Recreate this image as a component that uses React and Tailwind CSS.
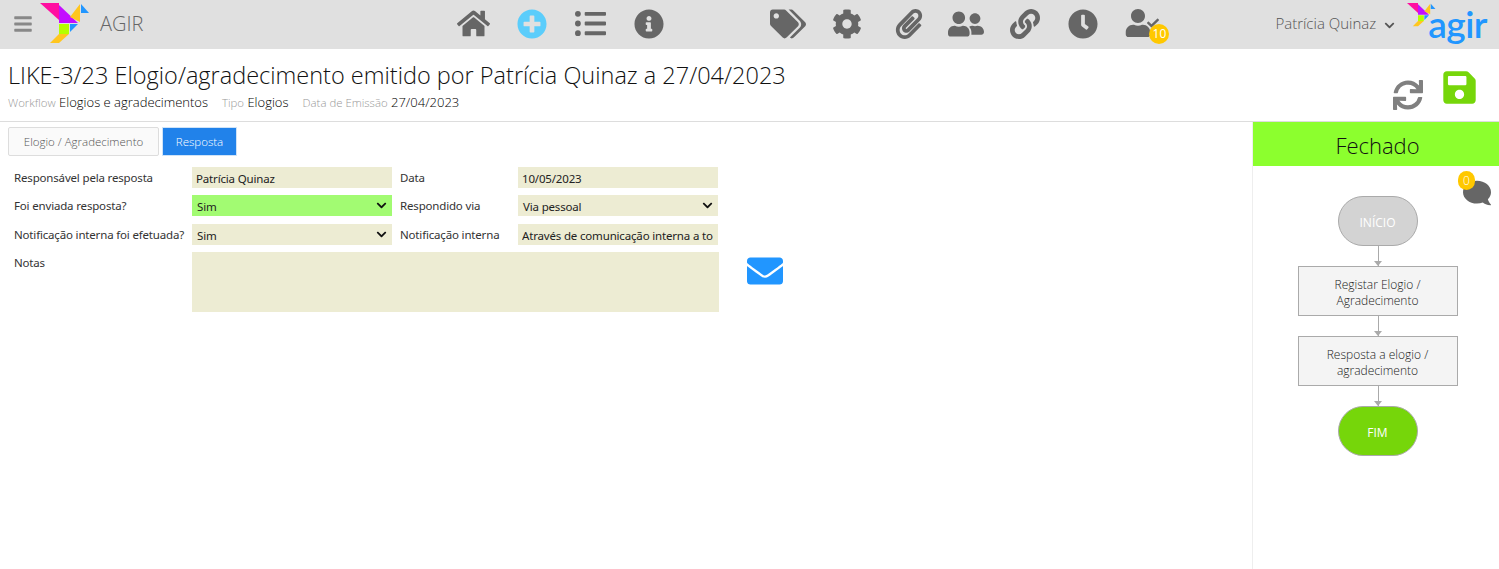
import React from 'react';
import {
  FaBars, FaHome, FaPlusCircle, FaListUl, FaInfoCircle, FaTags, FaCog, FaPaperclip,
  FaUserFriends, FaLink, FaClock, FaUser, FaCheck, FaChevronDown, FaSync, FaSave, FaEnvelope, FaComment,
} from 'react-icons/fa';

function Bird({ className }) {
  return (
    <svg viewBox="0 0 50 41" className={className}>
      <polygon points="0,0 19,0 19,17" fill="#ff0fa0" />
      <polygon points="19,2 38,20 19,20" fill="#c30eff" />
      <polygon points="30,14 40,1 40,19" fill="#ffc61f" />
      <polygon points="41,1 49,10 41,10" fill="#2196ff" />
      <rect x="19" y="21" width="10" height="10" fill="#b4ff00" />
      <polygon points="30,21 38,21 30,29" fill="#2196ff" />
      <polygon points="10,40 19,31 29,31 19,40" fill="#ffc61f" />
    </svg>
  );
}

function Field({ value, green }) {
  return (
    <input
      readOnly
      value={value}
      className={`h-[21px] w-[200px] pl-[4px] pr-[5px] pt-[1px] text-[11.5px] tracking-[-0.17px] text-[#222] outline-none ${green ? 'bg-[#a2fb72]' : 'bg-[#edecd3]'}`}
    />
  );
}

function Choice({ value, green }) {
  return (
    <div className={`relative h-[21px] w-[200px] pl-[5px] text-[11.5px] leading-[23px] tracking-[-0.17px] text-[#222] ${green ? 'bg-[#a2fb72]' : 'bg-[#edecd3]'}`}>
      {value}
      <FaChevronDown className="absolute right-[5px] top-[5px] text-[#111]" size={11} />
    </div>
  );
}

function Label({ children }) {
  return <div className="h-[21px] whitespace-nowrap text-[11.5px] leading-[22px] tracking-[-0.17px] text-[#333]">{children}</div>;
}

function Connector() {
  return (
    <div className="relative ml-[1px] h-[20px] w-px bg-[#aaa]">
      <div className="absolute bottom-0 left-[-4px] h-0 w-0 border-x-[4.5px] border-t-[5px] border-x-transparent border-t-[#aaa]" />
    </div>
  );
}

function Step({ children }) {
  return (
    <div className="flex h-[50px] w-[160px] items-center justify-center border border-[#aaa] bg-[#f4f4f4] px-[12px] pt-[4px] text-center text-[12px] leading-[16px] font-light text-[#222]">
      {children}
    </div>
  );
}

function Header() {
  return (
    <header className="flex h-[49px] items-center bg-[#e0e0e0] pb-[2px] text-[#666]">
      <FaBars size={20} className="ml-[13px] text-[#888]" />
      <Bird className="ml-[7px] mt-[3px] h-[41px] w-[50px] self-start" />
      <span className="ml-[10px] text-[20px] font-light text-[#666]">AGIR</span>
      <FaHome size={33} className="ml-[314px]" />
      <FaPlusCircle size={30} className="ml-[27px] text-[#5bcdfb]" />
      <FaListUl size={31} className="ml-[28px]" />
      <FaInfoCircle size={30} className="ml-[28px]" />
      <FaTags size={36} className="ml-[106px]" />
      <FaCog size={30} className="ml-[26px]" />
      <FaPaperclip size={30} className="ml-[32px]" />
      <FaUserFriends size={36} className="ml-[24px]" />
      <FaLink size={30} className="ml-[26px]" />
      <FaClock size={30} className="ml-[28px]" />
      <div className="relative ml-[26px] h-[36px] w-[36px]">
        <FaUser size={28} className="absolute left-0 top-[3px]" />
        <FaCheck size={12} className="absolute left-[23px] top-[11px]" />
        <span className="absolute left-[25px] top-[18px] flex h-[20px] w-[20px] items-center justify-center rounded-full bg-[#ffc800] text-[12px] text-white">10</span>
      </div>
      <span className="ml-[115px] text-[15px] font-light text-[#555]">Patrícia Quinaz</span>
      <FaChevronDown size={11} className="ml-[8px] mt-[3px] text-[#555]" />
      <div className="relative ml-[12px] mb-[-2px] h-[49px] w-[80px]">
        <Bird className="absolute left-0 top-[3px] h-[24px] w-[29px]" />
        <span className="absolute left-[21px] top-0 font-['Lato',sans-serif] text-[37px] leading-[48px] font-semibold tracking-[-0.5px] text-[#2196ff]">agir</span>
      </div>
    </header>
  );
}

export default function App() {
  return (
    <div className="flex h-[569px] w-[1499px] flex-col overflow-hidden bg-white font-['Open_Sans','Noto_Sans',sans-serif]">
      <Header />

      <div className="flex h-[73px] items-start justify-between border-b border-[#ddd] pl-[8px]">
        <div>
          <h1 className="mt-[8px] text-[23.5px] leading-[36px] font-light text-[#111]">
            LIKE-3/23 Elogio/agradecimento emitido por Patrícia Quinaz a 27/04/2023
          </h1>
          <div className="mt-[1px] flex items-baseline gap-[14px] text-[13px] leading-[16px] font-light text-black">
            <span><span className="text-[11.4px] text-[#999]">Workflow</span> Elogios e agradecimentos</span>
            <span><span className="text-[11.4px] text-[#999]">Tipo</span> Elogios</span>
            <span><span className="text-[11.4px] text-[#999]">Data de Emissão</span> 27/04/2023</span>
          </div>
        </div>
        <div className="flex items-start">
          <FaSync size={30} className="mr-[18px] mt-[31px] text-[#808080]" />
          <FaSave size={37} className="mr-[21px] mt-[20px] text-[#76d60a]" />
        </div>
      </div>

      <div className="flex flex-1">
        <main className="flex-1">
          <div className="ml-[8px] mt-[5px] flex gap-[3px] text-[11.5px] font-light">
            <div className="flex h-[29px] w-[151px] items-center justify-center rounded-[2px] border border-[#ddd] bg-[#fafafa] text-[#555]">Elogio / Agradecimento</div>
            <div className="flex h-[29px] w-[75px] items-center justify-center border border-[#cfe3f7] bg-[#2182ea] text-white">Resposta</div>
          </div>

          <div className="ml-[14px] mt-[11px] flex items-start font-['Noto_Sans','Open_Sans',sans-serif]">
            <div className="grid grid-cols-[178px_208px_118px_200px] grid-rows-[21px_22px_21px_60px] gap-y-[7px]">
              <Label>Responsável pela resposta</Label>
              <Field value="Patrícia Quinaz" />
              <Label>Data</Label>
              <Field value="10/05/2023" />

              <Label>Foi enviada resposta?</Label>
              <Choice value="Sim" green />
              <Label>Respondido via</Label>
              <Choice value="Via pessoal" />

              <Label>Notificação interna foi efetuada?</Label>
              <Choice value="Sim" />
              <Label>Notificação interna</Label>
              <Field value="Através de comunicação interna a todos os colaboradores" />

              <Label>Notas</Label>
              <textarea readOnly className="col-span-3 h-[60px] w-[527px] resize-none bg-[#edecd3] outline-none" />
            </div>
            <FaEnvelope size={36} className="ml-[29px] mt-[86px] text-[#2196ff]" />
          </div>
        </main>

        <aside className="flex w-[247px] flex-col border-l border-[#eee]">
          <div className="flex h-[44px] items-center justify-center bg-[#8cff2e] pl-[3px] pt-[2px] text-[22px] font-light text-[#111]">Fechado</div>
          <div className="relative flex flex-col items-center pl-[3px] pt-[30px]">
            <FaComment size={28} className="absolute right-[8px] top-[13px] -scale-x-100 text-[#666]" />
            <span className="absolute right-[24px] top-[5px] flex h-[19px] w-[17px] items-center justify-center rounded-full bg-[#ffc800] text-[12px] font-light text-white">0</span>
            <div className="flex h-[50px] w-[80px] items-center justify-center rounded-[25px] border border-[#aaa] bg-[#d3d3d3] pt-[3px] text-[12px] text-white">INÍCIO</div>
            <Connector />
            <Step>Registar Elogio / Agradecimento</Step>
            <Connector />
            <Step>Resposta a elogio / agradecimento</Step>
            <Connector />
            <div className="flex h-[50px] w-[80px] items-center justify-center rounded-[25px] border border-[#aaa] bg-[#76d60a] pt-[3px] text-[12px] text-white">FIM</div>
          </div>
        </aside>
      </div>
    </div>
  );
}
